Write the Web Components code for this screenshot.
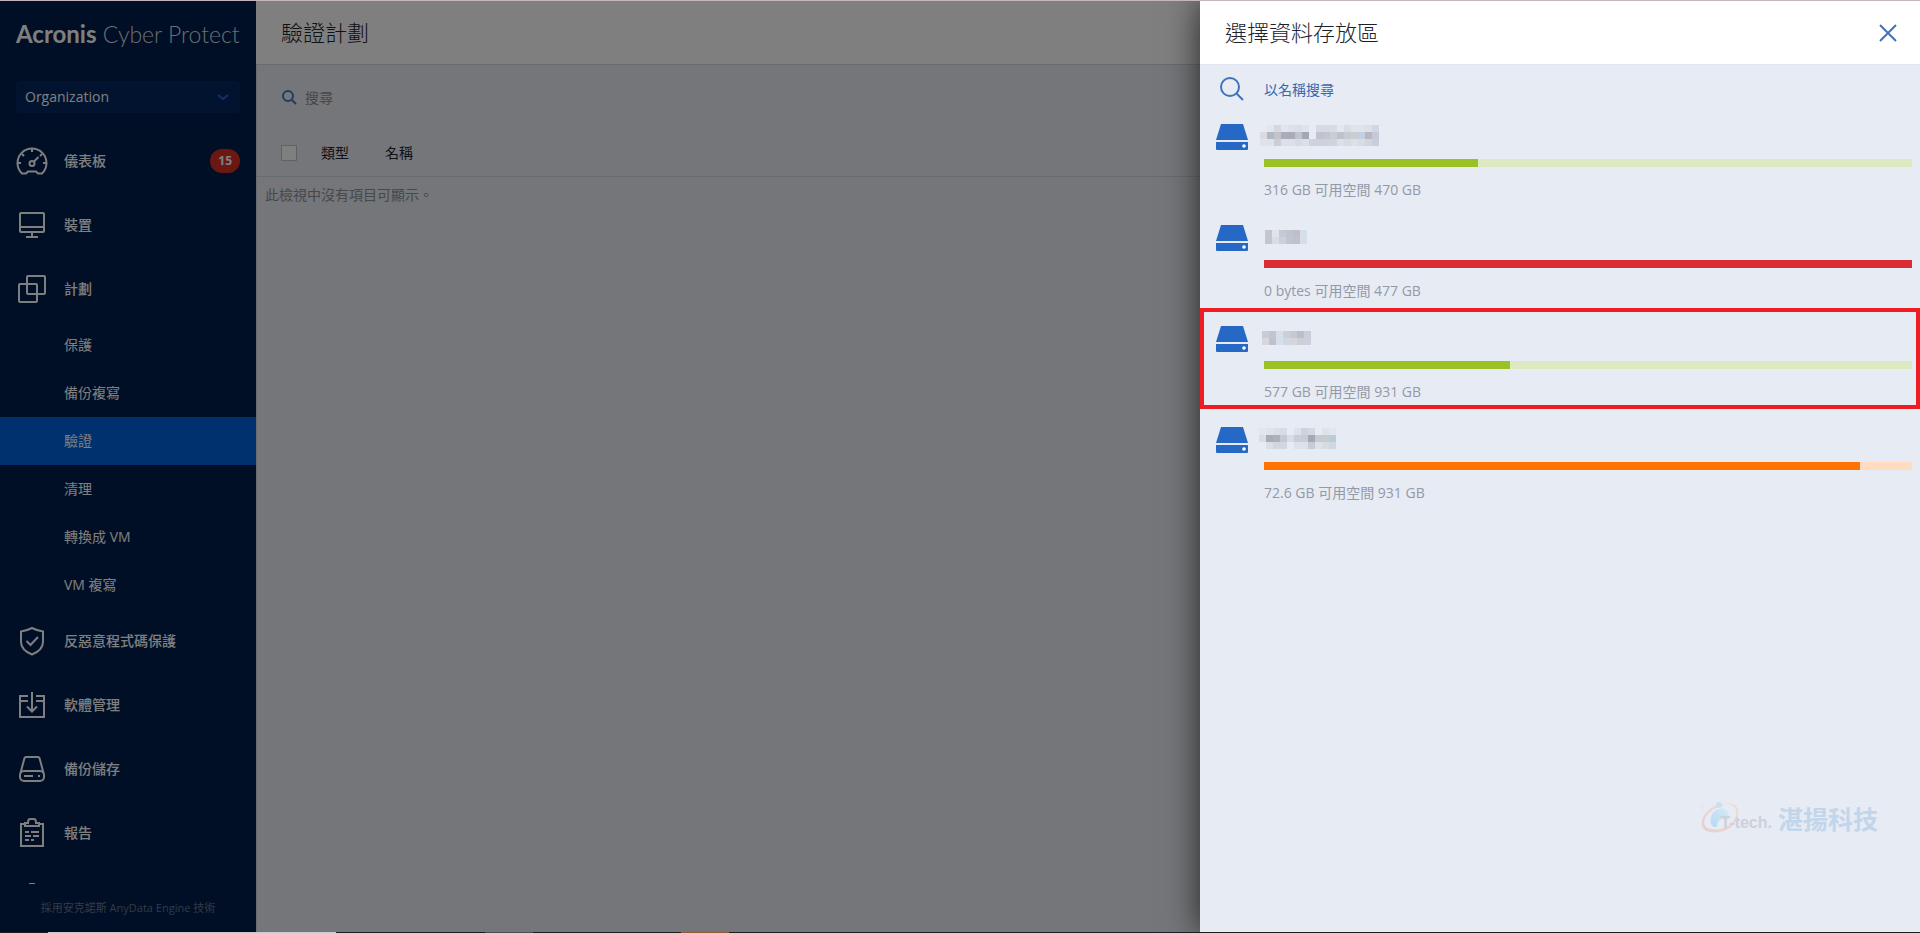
<!DOCTYPE html>
<html lang="zh-Hant">
<head>
<meta charset="utf-8">
<title>Acronis Cyber Protect</title>
<style>
    html, body {
        height: 100%;
        margin: 0;
    }

    body {
        font-family: "Open Sans", "Noto Sans CJK TC", sans-serif;
        font-size: 14px;
        line-height: 22px;
        overflow: hidden;
    }
</style>
</head>
<body>
<protect-app>
    <side-bar slot="side">
        <nav-item icon="gauge" badge="15">儀表板</nav-item>
        <nav-item icon="monitor">裝置</nav-item>
        <nav-item icon="plans">計劃</nav-item>
        <nav-item sub>保護</nav-item>
        <nav-item sub>備份複寫</nav-item>
        <nav-item sub active>驗證</nav-item>
        <nav-item sub>清理</nav-item>
        <nav-item sub>轉換成 VM</nav-item>
        <nav-item sub>VM 複寫</nav-item>
        <nav-item icon="shield">反惡意程式碼保護</nav-item>
        <nav-item icon="software">軟體管理</nav-item>
        <nav-item icon="drive">備份儲存</nav-item>
        <nav-item icon="report">報告</nav-item>
        <nav-item icon="more"></nav-item>
    </side-bar>
    <plan-view slot="main" heading="驗證計劃"></plan-view>
    <location-panel slot="panel" heading="選擇資料存放區">
        <storage-item mosaic="first" used="33" level="ok">316 GB 可用空間 470 GB</storage-item>
        <storage-item mosaic="second" used="100" level="full">0 bytes 可用空間 477 GB</storage-item>
        <storage-item mosaic="third" used="38" level="ok" selected>577 GB 可用空間 931 GB</storage-item>
        <storage-item mosaic="fourth" used="92" level="warn">72.6 GB 可用空間 931 GB</storage-item>
        <brand-mark slot="mark"></brand-mark>
    </location-panel>
</protect-app>

<script>
const ICONS = {
    gauge: '<path d="M6 28.5A14.5 14.5 0 1 1 26 28.5H22L20 26.5H12L10 28.5Z"/><path d="M2 18H5M27 18H30M16 4V7M6 9L8 11M26 9L24 11M18 16.500L22.500 12"/><circle cx="16" cy="18.500" r="2.500"/>',
    monitor: '<rect x="4" y="4" width="24" height="19" rx="1"/><path d="M4 18H28M16 23V28M10 28H22"/>',
    plans: '<rect x="11" y="3" width="18" height="18" rx="1"/><rect x="3" y="11" width="18" height="18" rx="1"/>',
    shield: '<path d="M16 3C12 5 9 6 5 6.500V17C5 23 10 27 16 29.500C22 27 27 23 27 17V6.500C23 6 20 5 16 3Z"/><path d="M10.500 16L14.500 20L22 12"/>',
    software: '<path d="M12 7H4V28H28V7H20M4 12H12M20 12H28M16 3V22M11 17.500L16 22.500L21 17.500"/>',
    drive: '<path d="M4.500 20L8.500 5Q9 4 10 4H22Q23 4 23.500 5L27.500 20"/><rect x="4" y="18" width="24" height="10" rx="4"/><path d="M8 23H17M22 23H24"/>',
    report: '<path d="M9 7H5V29H27V7H23"/><path d="M9 9V6H12Q12 2 14 2H18Q20 2 20 6H23V9Z"/><path d="M9 15H13M15 15H23M9 19H15M17 19H23M9 23H13M15 23H18"/>',
    more: '<path d="M13 2.500H19" stroke-width="1"/>'
};

// Redacted names: grid of 7px cells, "-" leaves the cell empty
const MOSAICS = {
    first: { x: -4, y: 0, rows: [
        '- e3e6ee d3d8e1 e2e5ed dde2ea d9dee7 dfe4ec - d5dae3 d5dae3 d8dce5 e3e7ef d8dde6 dfe3eb dfe3ea dae0ea d1d6e0',
        'dadae0 afb8c3 c3c4c5 a8adb9 a9adb8 bfc3cd a1a8b3 - bec3cd c4c6cc c8cfd2 bec2cd c6cbd5 cbcccf c2d0e3 b8b7c0 c3c9d9',
        'dee2ea dee2ea c9ced9 dce0e9 dce0e9 d5dae3 dadfe8 cdd2dc cdd2dc cdd2dc ced3dd dadfe8 d6dbe4 dde1e7 d6dbe4 d0d5df c8cedb'
    ] },
    second: { x: 1, y: 4, rows: [
        'c3c6d0 e0e4ea c3c9d6 bfc4d0 c0bfc7 d6dee9',
        'c3c6d0 d8dde4 cbd0d9 c0c5cf c2c1c9 d6dee9'
    ] },
    third: { x: -2, y: 4, rows: [
        'c9ccd7 c3c4d0 d5e0ea cad0da c7c9cf bdbec8 c9cedb',
        'd5d6de c1c0cf d5e0ea d0d9e1 d3d7dc cdced8 cbd0dc'
    ] },
    fourth: { x: -5, y: 0, rows: [
        'e2e6ee dfe3eb dadfe7 d6dce6 - dde2ea cdd3de d3d8e1 - dee3eb e2e6ef',
        'dcdde1 a5acba acb2b8 c4c9d5 d8dce5 c8cdd7 c9ccd7 a8a9b0 c3cbd9 c9cccd bacbda',
        '- dadfe2 d1d7e0 d1d7e0 - dde1ea dde1ea c6ccd7 dfe1e6 d5dce5 d1d7e2'
    ] }
};

function drawMosaic({ x, y, rows }) {
    return rows.map((row, r) => row.split(' ').map((color, c) => color === '-' ? '' :
        `<rect x="${x + c * 7}" y="${y + r * 7}" width="7" height="7" fill="#${color}"/>`
    ).join('')).join('');
}

// Page frame: sidebar and content under a dimmer, drawer on top
class ProtectApp extends HTMLElement {
    constructor() {
        super();
        this.attachShadow({ mode: 'open' });
        this.shadowRoot.innerHTML = `
            <style>
                :host {
                    display: flex;
                    flex-direction: column;
                    position: relative;
                    height: 100%;
                }

                .edge-top {
                    height: 1px;
                    background: #c8b4bc;
                }

                .edge-bottom {
                    height: 1px;
                    background: linear-gradient(to right,
                        #1c1c1f 48px, #c9cbcd 48px 336px, #1c1c1f 336px 485px,
                        #4b4c50 485px 533px, #1c1c1f 533px 681px,
                        #8e5a35 681px 729px, #1c1c1f 729px);
                }

                .frame {
                    flex: 1;
                    min-height: 0;
                    display: flex;
                    position: relative;
                    overflow: hidden;
                }

                .dimmer {
                    position: absolute;
                    inset: 0;
                    background: rgba(0, 0, 0, 0.5);
                }

                ::slotted([slot="main"]) {
                    flex: 1;
                }
            </style>
            <div class="edge-top"></div>
            <div class="frame">
                <slot name="side"></slot>
                <slot name="main"></slot>
                <div class="dimmer"></div>
                <slot name="panel"></slot>
            </div>
            <div class="edge-bottom"></div>
        `;
    }
}

class SideBar extends HTMLElement {
    constructor() {
        super();
        this.attachShadow({ mode: 'open' });
        this.shadowRoot.innerHTML = `
            <style>
                :host {
                    display: flex;
                    flex-direction: column;
                    flex: none;
                    width: 256px;
                    background: #001e4c;
                    color: #fff;
                }

                .logo {
                    padding: 18px 16px 0;
                    font: 300 23px/30px Lato, sans-serif;
                    white-space: nowrap;
                    color: #d5dae2;
                }

                .logo b {
                    font-size: 24px;
                    font-weight: 700;
                    color: #fff;
                }

                .org {
                    display: flex;
                    align-items: center;
                    justify-content: space-between;
                    height: 32px;
                    margin: 32px 16px 16px;
                    padding: 0 10px 0 8px;
                    border: 1px solid #032a62;
                    border-radius: 4px;
                    background: #02265c;
                    color: inherit;
                    font: inherit;
                }

                nav {
                    flex: 1;
                    min-height: 0;
                    overflow: hidden;
                }

                footer {
                    padding: 13px 0;
                    text-align: center;
                    font-size: 11px;
                    color: #66758e;
                }
            </style>
            <div class="logo"><b>Acronis</b> Cyber Protect</div>
            <button class="org" type="button">
                Organization
                <svg width="12" height="8" viewBox="0 0 12 8" fill="none" stroke="#2668c5" stroke-width="2"><path d="M1 2L6 6L11 2"/></svg>
            </button>
            <nav><slot></slot></nav>
            <footer>採用安克諾斯 AnyData Engine 技術</footer>
        `;
    }
}

class NavItem extends HTMLElement {
    constructor() {
        super();
        this.attachShadow({ mode: 'open' });
    }

    connectedCallback() {
        const icon = this.getAttribute('icon');
        const badge = this.getAttribute('badge');
        this.shadowRoot.innerHTML = `
            <style>
                :host {
                    display: block;
                }

                a {
                    display: flex;
                    align-items: center;
                    height: 64px;
                    padding: 0 16px;
                    color: inherit;
                    text-decoration: none;
                    font-weight: 500;
                }

                .label {
                    flex: 1;
                    margin-left: 16px;
                }

                svg {
                    flex: none;
                }

                :host([sub]) a {
                    height: 48px;
                    padding-left: 48px;
                    font-weight: 400;
                }

                :host([active]) a {
                    background: #0062de;
                }

                .badge {
                    padding: 1px 8px;
                    border-radius: 12px;
                    background: #d93025;
                    font-size: 12px;
                    font-weight: 700;
                }
            </style>
            <a href="#">
                ${icon ? `<svg width="32" height="32" viewBox="0 0 32 32" fill="none" stroke="currentColor" stroke-width="2">${ICONS[icon]}</svg>` : ''}
                <span class="label"><slot></slot></span>
                ${badge ? `<span class="badge">${badge}</span>` : ''}
            </a>
        `;
    }
}

class PlanView extends HTMLElement {
    constructor() {
        super();
        this.attachShadow({ mode: 'open' });
    }

    connectedCallback() {
        this.shadowRoot.innerHTML = `
            <style>
                :host {
                    display: flex;
                    flex-direction: column;
                    background: #eaecf2;
                    color: #1c222b;
                }

                header {
                    padding: 15px 25px 16px;
                    border-bottom: 1px solid #cfd6e4;
                    background: #fff;
                }

                h1 {
                    margin: 0;
                    font-size: 22px;
                    line-height: 32px;
                    font-weight: 300;
                }

                .content {
                    flex: 1;
                    border-left: 1px solid #cfd6e4;
                }

                .search {
                    display: flex;
                    align-items: center;
                    gap: 8px;
                    padding: 20px 24px 21px;
                }

                .search input {
                    flex: 1;
                    height: 24px;
                    padding: 0;
                    border: 0;
                    background: none;
                    font: inherit;
                    outline: none;
                }

                .search input::placeholder {
                    color: #8d9099;
                    opacity: 1;
                }

                table {
                    width: 100%;
                    border-collapse: collapse;
                }

                th {
                    height: 46px;
                    padding: 0 0 0 24px;
                    border-bottom: 1px solid #cfd6e4;
                    text-align: left;
                    font-weight: 400;
                }

                th:first-child {
                    width: 16px;
                }

                th:nth-child(2) {
                    width: 40px;
                }

                td {
                    padding: 7px 8px;
                    color: #8d9099;
                }

                input[type="checkbox"] {
                    appearance: none;
                    display: block;
                    width: 16px;
                    height: 16px;
                    margin: 0;
                    border: 1px solid #b9c4d8;
                    background: #fff;
                }
            </style>
            <header><h1>${this.getAttribute('heading')}</h1></header>
            <div class="content">
                <label class="search">
                    <svg width="16" height="16" viewBox="0 0 16 16" fill="none" stroke="#3f77c4" stroke-width="2"><circle cx="7" cy="7" r="5"/><path d="M11 11L15 15"/></svg>
                    <input type="search" placeholder="搜尋" aria-label="搜尋">
                </label>
                <table>
                    <thead>
                        <tr>
                            <th><input type="checkbox" aria-label="全選"></th>
                            <th>類型</th>
                            <th>名稱</th>
                        </tr>
                    </thead>
                    <tbody>
                        <tr><td colspan="3">此檢視中沒有項目可顯示。</td></tr>
                    </tbody>
                </table>
            </div>
        `;
    }
}

class LocationPanel extends HTMLElement {
    constructor() {
        super();
        this.attachShadow({ mode: 'open' });
    }

    connectedCallback() {
        this.shadowRoot.innerHTML = `
            <style>
                :host {
                    display: block;
                    position: absolute;
                    top: 0;
                    right: 0;
                    bottom: 0;
                    width: 37.5%;
                    background: #e7ebf4;
                    box-shadow: 0 0 32px rgba(0, 0, 0, 0.7);
                }

                header {
                    display: flex;
                    align-items: center;
                    justify-content: space-between;
                    padding: 15px 20px 16px 25px;
                    background: #fff;
                    border-bottom: 1px solid #e1e5ef;
                    color: #1c222b;
                }

                h2 {
                    margin: 0;
                    font-size: 22px;
                    line-height: 32px;
                    font-weight: 300;
                }

                button {
                    display: flex;
                    padding: 0;
                    border: 0;
                    background: none;
                }

                .search {
                    display: flex;
                    align-items: center;
                    gap: 20px;
                    padding: 12px 20px 5px;
                }

                .search input {
                    flex: 1;
                    height: 24px;
                    padding: 0;
                    border: 0;
                    background: none;
                    font: inherit;
                    outline: none;
                }

                .search input::placeholder {
                    color: #3a68ad;
                    opacity: 1;
                }

                ::slotted([slot="mark"]) {
                    position: absolute;
                    right: 42px;
                    bottom: 91px;
                }
            </style>
            <header>
                <h2>${this.getAttribute('heading')}</h2>
                <button type="button" aria-label="關閉">
                    <svg width="24" height="24" viewBox="0 0 24 24" fill="none" stroke="#4073b8" stroke-width="2"><path d="M4 5L20 21M20 5L4 21"/></svg>
                </button>
            </header>
            <label class="search">
                <svg width="24" height="24" viewBox="0 0 24 24" fill="none" stroke="#4073b8" stroke-width="2"><circle cx="10" cy="10" r="9"/><path d="M16 16L23 23"/></svg>
                <input type="search" placeholder="以名稱搜尋" aria-label="以名稱搜尋">
            </label>
            <slot></slot>
            <slot name="mark"></slot>
        `;
    }
}

class StorageItem extends HTMLElement {
    constructor() {
        super();
        this.attachShadow({ mode: 'open' });
    }

    connectedCallback() {
        const used = this.getAttribute('used');
        this.shadowRoot.innerHTML = `
            <style>
                :host {
                    --bar: #9bc225;
                    --track: #dde9c0;
                    display: flex;
                    gap: 16px;
                    padding: 18px 8px 6px 16px;
                    color: #9399a5;
                }

                :host([level="full"]) {
                    --bar: #db2c33;
                }

                :host([level="warn"]) {
                    --bar: #ff7300;
                    --track: #ffdbc0;
                }

                :host([selected]) {
                    outline: 4px solid #ef1c24;
                    outline-offset: -4px;
                }

                .disk {
                    flex: none;
                }

                .body {
                    flex: 1;
                }

                .name {
                    display: block;
                    overflow: visible;
                    margin: 1px 0 13px;
                }

                .track {
                    height: 8px;
                    margin-bottom: 12px;
                    background: var(--track);
                }

                .fill {
                    height: 100%;
                    width: ${used}%;
                    background: var(--bar);
                }
            </style>
            <svg class="disk" width="32" height="26" viewBox="0 0 32 26" fill="#2668c5">
                <path d="M5 0H27L32 16H0ZM0 18H32V25Q32 26 31 26H1Q0 26 0 25Z"/>
                <circle cx="28" cy="22" r="1.800" fill="#fff"/>
            </svg>
            <div class="body">
                <svg class="name" width="119" height="21" shape-rendering="crispEdges">${drawMosaic(MOSAICS[this.getAttribute('mosaic')])}</svg>
                <div class="track" role="progressbar" aria-valuenow="${used}" aria-valuemin="0" aria-valuemax="100"><div class="fill"></div></div>
                <slot></slot>
            </div>
        `;
    }
}

class BrandMark extends HTMLElement {
    constructor() {
        super();
        this.attachShadow({ mode: 'open' });
        this.shadowRoot.innerHTML = `
            <style>
                :host {
                    display: flex;
                    align-items: center;
                    font-weight: 700;
                    line-height: 36px;
                    white-space: nowrap;
                }

                .en {
                    margin: 8px 6px 0 -20px;
                    font-family: "Liberation Sans", sans-serif;
                    font-size: 16px;
                    color: #cdd0d9;
                    z-index: 1;
                }

                .zh {
                    font-size: 25px;
                    color: #c1d6eb;
                }
            </style>
            <svg width="40" height="36" viewBox="0 0 40 36" fill="none">
                <defs>
                    <linearGradient id="ring" x1="1" y1="0" x2="0" y2="1">
                        <stop offset="0" stop-color="#ecdccb"/>
                        <stop offset="1" stop-color="#eacdd2"/>
                    </linearGradient>
                    <linearGradient id="drop" x1="1" y1="0" x2="0" y2="1">
                        <stop offset="0" stop-color="#d5e9f4"/>
                        <stop offset="1" stop-color="#b5daf1"/>
                    </linearGradient>
                </defs>
                <path d="M26 3C34 1 40 6 38 15C35 27 23 33 10 31C0 29 -1 20 6 12C11 6 18 3 26 3C18 5 11 9 7 14C2 21 4 27 11 28C22 30 33 25 36 15C38 8 34 3 26 3Z" fill="url(#ring)"/>
                <path d="M3 10Q-1 3 8 0" stroke="#eae3e7"/>
                <circle cx="19" cy="4" r="3" fill="#c5e2f3"/>
                <path d="M14 26C8 24 10 9 20 8C27 7 30 12 28 19Q24 16 20 19Q17 21 17 26Z" fill="url(#drop)"/>
            </svg>
            <span class="en">T-tech.</span>
            <span class="zh">湛揚科技</span>
        `;
    }
}

customElements.define('protect-app', ProtectApp);
customElements.define('side-bar', SideBar);
customElements.define('nav-item', NavItem);
customElements.define('plan-view', PlanView);
customElements.define('location-panel', LocationPanel);
customElements.define('storage-item', StorageItem);
customElements.define('brand-mark', BrandMark);
</script>
</body>
</html>
